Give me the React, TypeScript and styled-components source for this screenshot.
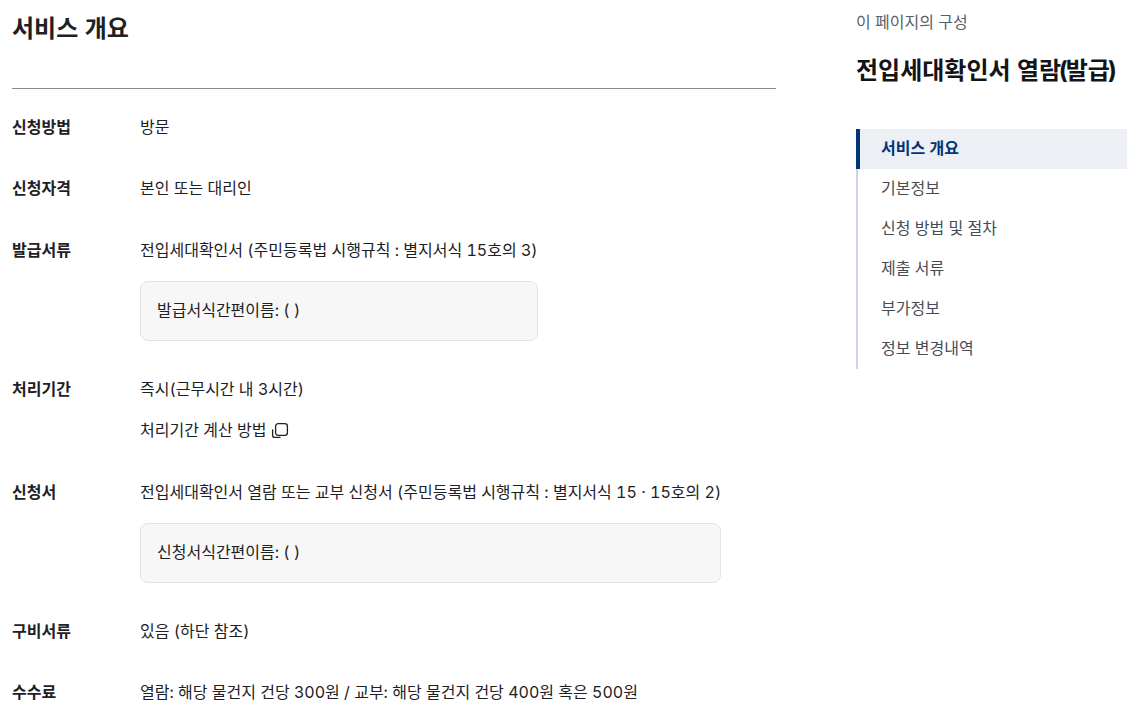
import * as React from "react";
import styled, { createGlobalStyle } from "styled-components";

const GlobalStyle = createGlobalStyle`
  html, body {
    margin: 0;
    padding: 0;
    background: #fff;
    height: 726px;
    overflow: hidden;
  }
  body {
    font-family: Inter, "Noto Sans CJK KR", sans-serif;
    font-variant-numeric: tabular-nums;
    color: #1e2124;
  }
`;

const Page = styled.div`
  display: flex;
  align-items: flex-start;
  width: 1127px;
`;

const Main = styled.main`
  width: 764px;
  margin-left: 12px;
  flex: none;
`;

const Heading = styled.h2`
  margin: 0;
  padding-top: 12px;
  box-sizing: border-box;
  border-bottom: 1px solid #8a8a8a;
  height: 89px;
  font-size: 24px;
  line-height: 34px;
  font-weight: 700;
  color: #1e2124;
`;

const List = styled.dl`
  margin: 26px 0 0;
  display: flex;
  flex-direction: column;
  gap: 37px;
`;

const Row = styled.div<{ $hasNote?: boolean }>`
  display: grid;
  grid-template-columns: 128px 1fr;
  margin-top: ${(p) => (p.$hasNote ? "1px" : "0")};
`;

const Label = styled.dt`
  font-size: 16px;
  line-height: 24px;
  font-weight: 700;
`;

const Value = styled.dd`
  margin: 0;
  width: fit-content;
  font-size: 16px;
  line-height: 24px;
  font-weight: 400;
  display: flex;
  flex-direction: column;
`;

const Note = styled.div`
  margin-top: 19px;
  margin-bottom: -1px;
  height: 60px;
  box-sizing: border-box;
  display: flex;
  align-items: center;
  padding: 0 16px 2px;
  background: #f7f7f7;
  border: 1px solid #e3e3e3;
  border-radius: 8px;
`;

const GuideLink = styled.a`
  margin-top: 17px;
  display: inline-flex;
  align-items: center;
  gap: 5px;
  color: inherit;
  text-decoration: none;
`;

const Aside = styled.aside`
  margin-left: 80px;
  flex: none;
  width: 271px;
  padding-top: 10px;
`;

const Eyebrow = styled.div`
  font-size: 16px;
  line-height: 24px;
  color: #58616a;
`;

const DocTitle = styled.div`
  margin-top: 21px;
  font-size: 24px;
  line-height: 32px;
  font-weight: 700;
  color: #131416;
  white-space: nowrap;
`;

/* parens in the title sit tighter than Inter's own advance */
const TightParen = styled.span`
  letter-spacing: -2.4px;
`;

const Toc = styled.ul`
  list-style: none;
  margin: 42px 0 0;
  padding: 0;
  border-left: 2px solid #cdd6e3;
`;

const TocItem = styled.li<{ $active?: boolean }>`
  height: 40px;
  box-sizing: border-box;
  margin-left: -2px;
  padding: 0 0 5px ${(p) => (p.$active ? "21px" : "23px")};
  display: flex;
  align-items: center;
  font-size: 16px;
  border-left: ${(p) => (p.$active ? "4px solid #003675" : "2px solid transparent")};
  background: ${(p) => (p.$active ? "#eceff4" : "transparent")};
  color: ${(p) => (p.$active ? "#003675" : "#464c53")};
  font-weight: ${(p) => (p.$active ? 700 : 400)};
`;

const CopyIcon = () => (
  <svg width="18" height="18" viewBox="0 0 18 18" fill="none" stroke="#1e2124" strokeWidth="1.3">
    <rect x="4.6" y="2.6" width="11.8" height="11.8" rx="2.6" />
    <path d="M1.6 9v5.2a2.2 2.2 0 0 0 2.2 2.2H9" strokeLinecap="round" />
  </svg>
);

const tocItems = ["기본정보", "신청 방법 및 절차", "제출 서류", "부가정보", "정보 변경내역"];

export default function App() {
  return (
    <Page>
      <GlobalStyle />
      <Main>
        <Heading>서비스 개요</Heading>
        <List>
          <Row>
            <Label>신청방법</Label>
            <Value>방문</Value>
          </Row>
          <Row>
            <Label>신청자격</Label>
            <Value>본인 또는 대리인</Value>
          </Row>
          <Row $hasNote>
            <Label>발급서류</Label>
            <Value>
              <span>전입세대확인서 (주민등록법 시행규칙 : 별지서식 15호의 3)</span>
              <Note>발급서식간편이름: ( )</Note>
            </Value>
          </Row>
          <Row>
            <Label>처리기간</Label>
            <Value>
              <span>즉시(근무시간 내 3시간)</span>
              <GuideLink href="#">
                처리기간 계산 방법
                <CopyIcon />
              </GuideLink>
            </Value>
          </Row>
          <Row $hasNote>
            <Label>신청서</Label>
            <Value>
              <span>전입세대확인서 열람 또는 교부 신청서 (주민등록법 시행규칙 : 별지서식 15 · 15호의 2)</span>
              <Note>신청서식간편이름: ( )</Note>
            </Value>
          </Row>
          <Row>
            <Label>구비서류</Label>
            <Value>있음 (하단 참조)</Value>
          </Row>
          <Row>
            <Label>수수료</Label>
            <Value>열람: 해당 물건지 건당 300원 / 교부: 해당 물건지 건당 400원 혹은 500원</Value>
          </Row>
        </List>
      </Main>
      <Aside>
        <Eyebrow>이 페이지의 구성</Eyebrow>
        <DocTitle>
          전입세대확인서 열<TightParen>람(</TightParen>발<TightParen>급</TightParen>)
        </DocTitle>
        <Toc>
          <TocItem $active>서비스 개요</TocItem>
          {tocItems.map((item) => (
            <TocItem key={item}>{item}</TocItem>
          ))}
        </Toc>
      </Aside>
    </Page>
  );
}
